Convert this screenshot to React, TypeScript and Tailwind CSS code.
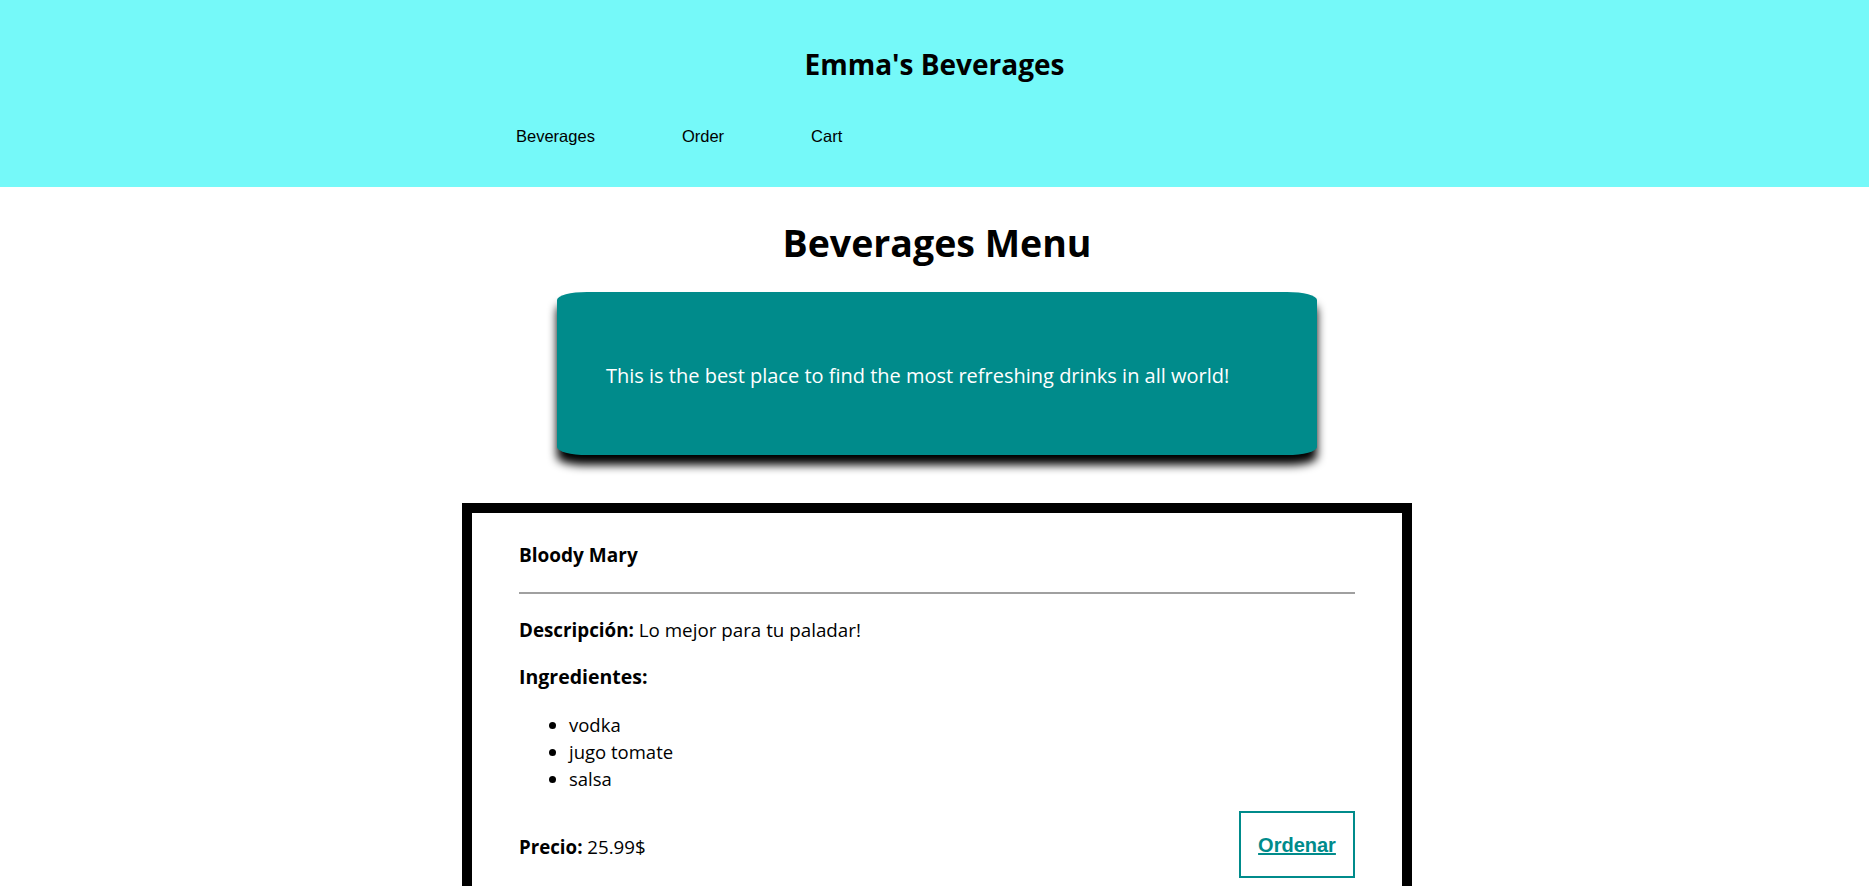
import React from "react";

const drink = {
  name: "Bloody Mary",
  description: "Lo mejor para tu paladar!",
  ingredients: ["vodka", "jugo tomate", "salsa"],
  price: "25.99",
};

const Header: React.FC = () => {
  return (
    <header className="bg-[#75f9f9] h-[187px] flex flex-col">
      <h2 className="mt-[46px] text-center text-[28px] leading-[36px] font-bold text-black">
        Emma&apos;s Beverages
      </h2>
      <nav className="mt-[44px]">
        <ul className="flex gap-[87px] pl-[516px] font-['Liberation_Sans',Arial,sans-serif] text-[16.5px] leading-[20px] text-black">
          <li>Beverages</li>
          <li>Order</li>
          <li>Cart</li>
        </ul>
      </nav>
    </header>
  );
};

const DrinkCard: React.FC = () => {
  return (
    <div className="w-[950px] mx-auto border-[10px] border-black bg-white px-[47px] pt-[30px] pb-[60px]">
      <h3 className="text-[19px] leading-[24px] font-bold">{drink.name}</h3>
      <hr className="mt-[25px] border-0 border-t-2 border-[#a0a0a0]" />
      <p className="mt-[23px] text-[18.8px] leading-[27px]">
        <b>Descripción:</b> {drink.description}
      </p>
      <p className="mt-[18.5px] text-[19.5px] leading-[27px] font-bold">Ingredientes:</p>
      <ul className="mt-[21px] list-disc pl-[50px] text-[18.5px] leading-[27px]">
        {drink.ingredients.map((ing) => (
          <li key={ing}>{ing}</li>
        ))}
      </ul>
      <div className="mt-[19.5px] flex items-center justify-between">
        <p className="pt-[3px] text-[18.7px] leading-[27px]">
          <b>Precio:</b> {drink.price}$
        </p>
        <button className="h-[67px] w-[116px] border-2 border-[#008b8b] flex items-center justify-center font-['Liberation_Sans',Arial,sans-serif] text-[20px] font-bold text-[#008b8b] underline">
          Ordenar
        </button>
      </div>
    </div>
  );
};

export default function App() {
  return (
    <div className="min-h-screen bg-white text-black font-['Open_Sans',sans-serif]">
      <Header />
      <main className="flex flex-col items-center pl-[5px]">
        <h1 className="mt-[33px] text-[37.5px] leading-[46px] font-bold text-center">Beverages Menu</h1>
        <section className="mt-[26px] w-[760px] h-[163px] bg-[#008b8b] rounded-[30px/8px] shadow-[0_10px_10px_#000] flex items-center px-[49px] pt-[5px]">
          <p className="text-white text-[20px] leading-[26px]">
            This is the best place to find the most refreshing drinks in all world!
          </p>
        </section>
        <div className="mt-[48px] w-full">
          <DrinkCard />
        </div>
      </main>
    </div>
  );
}
